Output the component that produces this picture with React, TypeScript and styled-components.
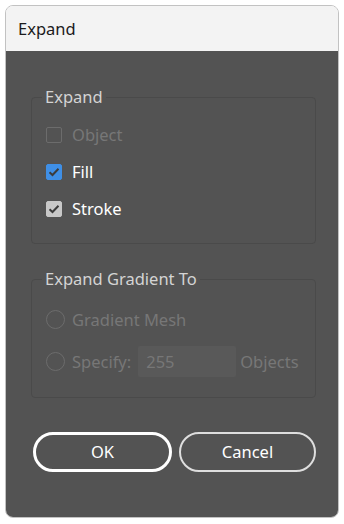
import React from "react";
import styled, { createGlobalStyle } from "styled-components";

const Global = createGlobalStyle`
  html, body { margin: 0; padding: 0; background: #ffffff; }
  body { font-family: "Noto Sans", "Open Sans", sans-serif; }
  * { box-sizing: border-box; }
`;

const Window = styled.div`
  margin: 5px;
  width: 334px;
  height: 513px;
  border: 1px solid #c2c2c2;
  border-radius: 8px;
  overflow: hidden;
  display: flex;
  flex-direction: column;
`;

const TitleBar = styled.div`
  height: 45px;
  flex: none;
  background: #f3f3f3;
  color: #1b1b1b;
  font-size: 16.5px;
  display: flex;
  align-items: center;
  padding-left: 12px;
  padding-bottom: 1px;
`;

const Body = styled.div`
  flex: 1;
  background: #535353;
  padding: 36px 22px 0 25px;
  display: flex;
  flex-direction: column;
`;

const Group = styled.fieldset<{ $gap?: number; $pb: number }>`
  margin: 0 0 ${(p) => p.$gap ?? 0}px 0;
  border: 1px solid #4a4a4a;
  border-radius: 4px;
  padding: 9px 10px ${(p) => p.$pb}px 14px;
  min-width: 0;
  display: flex;
  flex-direction: column;
`;

const Legend = styled.legend`
  padding: 0 3px;
  margin-left: -4px;
  font-size: 16.5px;
  line-height: 20px;
  color: #d4d4d4;
`;

const Row = styled.div<{ $h: number }>`
  height: ${(p) => p.$h}px;
  display: flex;
  align-items: center;
  font-size: 16.5px;
`;

const Box = styled.span<{ $variant: "off" | "blue" | "gray" }>`
  width: 16px;
  height: 16px;
  border-radius: 2px;
  flex: none;
  display: flex;
  align-items: center;
  justify-content: center;
  margin-right: 10px;
  border: 1px solid
    ${(p) => (p.$variant === "off" ? "#6c6c6c" : p.$variant === "blue" ? "#3f8fe6" : "#c8c8c8")};
  background: ${(p) =>
    p.$variant === "off" ? "transparent" : p.$variant === "blue" ? "#3f8fe6" : "#c8c8c8"};
`;

const Label = styled.span<{ $disabled?: boolean }>`
  color: ${(p) => (p.$disabled ? "#777777" : "#ffffff")};
`;

const Radio = styled.span`
  width: 19px;
  height: 19px;
  border-radius: 50%;
  border: 1.5px solid #6c6c6c;
  flex: none;
  margin-right: 7px;
`;

const NumberBox = styled.span`
  width: 98px;
  height: 31px;
  background: #595959;
  border-radius: 2px;
  color: #777777;
  display: flex;
  align-items: center;
  padding-left: 8px;
  margin: 0 4px 0 7px;
`;

const Buttons = styled.div`
  margin-top: 34px;
  padding-left: 2px;
  display: flex;
  gap: 7px;
`;

const Button = styled.button<{ $primary?: boolean }>`
  flex: 1;
  height: 40px;
  border-radius: 20px;
  background: transparent;
  border: ${(p) => (p.$primary ? "3px solid #ffffff" : "2px solid #dedede")};
  color: #ffffff;
  font-family: inherit;
  font-size: 16.5px;
  padding: 0 0 2px 0;
`;

const Check = () => (
  <svg width="12" height="10" viewBox="0 0 12 10">
    <path d="M1.5 5.2 L4.5 8 L10.5 1.8" fill="none" stroke="#3c3c3c" strokeWidth="2" />
  </svg>
);

export default function App() {
  return (
    <>
      <Global />
      <Window>
        <TitleBar>Expand</TitleBar>
        <Body>
          <Group $gap={25} $pb={16}>
            <Legend>Expand</Legend>
            <Row $h={37}>
              <Box $variant="off" />
              <Label $disabled>Object</Label>
            </Row>
            <Row $h={37}>
              <Box $variant="blue">
                <Check />
              </Box>
              <Label>Fill</Label>
            </Row>
            <Row $h={37}>
              <Box $variant="gray">
                <Check />
              </Box>
              <Label>Stroke</Label>
            </Row>
          </Group>
          <Group $pb={15}>
            <Legend>Expand Gradient To</Legend>
            <Row $h={42}>
              <Radio />
              <Label $disabled>Gradient Mesh</Label>
            </Row>
            <Row $h={42}>
              <Radio />
              <Label $disabled>Specify:</Label>
              <NumberBox>255</NumberBox>
              <Label $disabled>Objects</Label>
            </Row>
          </Group>
          <Buttons>
            <Button $primary>OK</Button>
            <Button>Cancel</Button>
          </Buttons>
        </Body>
      </Window>
    </>
  );
}
